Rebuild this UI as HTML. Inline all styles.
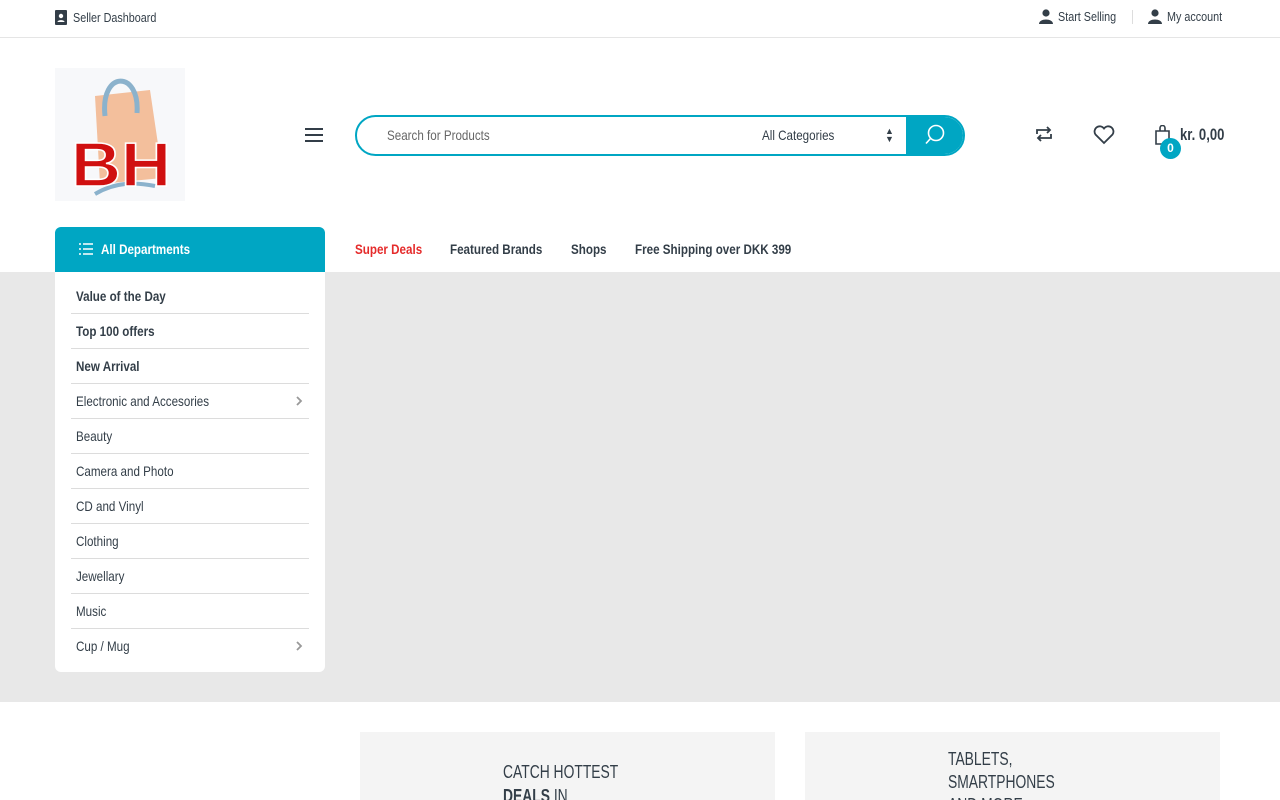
<!DOCTYPE html>
<html><head><meta charset="utf-8"><style>
*{box-sizing:border-box;margin:0;padding:0}
html,body{width:1280px;height:800px;overflow:hidden}
body{background:#fff;font-family:"Liberation Sans",sans-serif;color:#333e48;font-size:14px;position:relative}
.a{position:absolute}
.n{display:inline-block;transform:scaleX(.83);transform-origin:left center;white-space:nowrap}
.m{display:inline-block;transform:scaleX(.77);transform-origin:left center;white-space:nowrap}
.top{top:0;left:0;width:1280px;height:38px;border-bottom:1px solid #e5e5e5;font-size:13px}
.menu li{list-style:none;height:35px;border-bottom:1px solid #dcdcdc;margin:0 16px;padding-left:5px;line-height:35px;font-size:14px;position:relative}
.menu li:last-child{border:none}
.chev{position:absolute;right:6px;top:12px}
</style></head><body>
<div class="a top">
 <div class="a" style="left:55px;top:10px;display:flex;align-items:center;gap:6px"><svg width="12" height="15" viewBox="0 0 12 15"><rect width="12" height="15" rx="1" fill="#333e48"/><circle cx="6" cy="6" r="2.2" fill="#fff"/><path d="M2.5 12c0-2.5 7-2.5 7 0z" fill="#fff"/></svg><span class="n">Seller Dashboard</span></div>
 <div class="a" style="left:1039px;top:9px;display:flex;align-items:center;gap:5px"><svg width="14" height="15" viewBox="0 0 14 15"><circle cx="7" cy="4" r="3.6" fill="#333e48"/><path d="M0 15c0-6 14-6 14 0z" fill="#333e48"/></svg><span class="n">Start Selling</span></div>
 <div class="a" style="left:1132px;top:10px;height:14px;border-left:1px solid #ddd"></div>
 <div class="a" style="left:1148px;top:9px;display:flex;align-items:center;gap:5px"><svg width="14" height="15" viewBox="0 0 14 15"><circle cx="7" cy="4" r="3.6" fill="#333e48"/><path d="M0 15c0-6 14-6 14 0z" fill="#333e48"/></svg><span class="n">My account</span></div>
</div>
<svg class="a" style="left:55px;top:68px" width="130" height="133" viewBox="0 0 130 133"><rect width="130" height="133" fill="#f7f8fa"/><path d="M40 28 L95 22 L108 110 L45 116z" fill="#f3bf9c"/><path d="M50 48 C45 2 85 2 82 45" stroke="#8bb2cc" stroke-width="5" fill="none"/><path d="M40 126 C60 114 80 114 100 118" stroke="#8bb2cc" stroke-width="4" fill="none"/><text x="16" y="118" font-family="Liberation Sans" font-weight="bold" font-size="62" fill="#d01010" stroke="#fff" stroke-width="1.5" textLength="100" lengthAdjust="spacingAndGlyphs">BH</text></svg>
<svg class="a" style="left:305px;top:127px" width="18" height="16"><path d="M0 2h18M0 8h18M0 14h18" stroke="#333e48" stroke-width="2"/></svg>
<div class="a" style="left:355px;top:115px;width:610px;height:41px;border:2px solid #00a6c3;border-radius:21px;overflow:hidden">
 <div class="a" style="left:30px;top:10px;font-size:14px;color:#666"><span class="n">Search for Products</span></div>
 <div class="a" style="left:405px;top:10px;font-size:14px"><span class="n">All Categories</span></div>
 <div class="a" style="left:528px;top:10px;font-size:9px;line-height:8px">▲<br>▼</div>
 <div class="a" style="left:549px;top:-2px;width:61px;height:41px;background:#00a6c3"><svg class="a" style="left:18px;top:9px" width="22" height="22"><circle cx="12" cy="9" r="7.5" stroke="#fff" stroke-width="1.6" fill="none"/><path d="M6.5 14.5l-4.5 5" stroke="#fff" stroke-width="1.6"/></svg></div>
</div>
<svg class="a" style="left:1034px;top:125px" width="20" height="18" viewBox="0 0 20 18"><path d="M3 9V5h13M13 2l3 3-3 3M17 9v4H4M7 16l-3-3 3-3" stroke="#333e48" stroke-width="1.8" fill="none"/></svg>
<svg class="a" style="left:1093px;top:125px" width="22" height="20" viewBox="0 0 22 20"><path d="M11 18 2.5 9.5A5 5 0 0 1 11 3.5a5 5 0 0 1 8.5 6z" stroke="#333e48" stroke-width="1.8" fill="none"/></svg>
<svg class="a" style="left:1155px;top:125px" width="18" height="20" viewBox="0 0 18 20"><path d="M1 6h13v13H1zM5 6V3a2.5 2.5 0 0 1 5 0v3" stroke="#333e48" stroke-width="1.6" fill="none"/></svg>
<div class="a" style="left:1160px;top:138px;width:21px;height:21px;border-radius:50%;background:#00a6c3;color:#fff;font-size:12px;font-weight:bold;text-align:center;line-height:21px">0</div>
<div class="a" style="left:1180px;top:125px;font-size:17px;font-weight:bold"><span class="m">kr. 0,00</span></div>
<div class="a" style="left:0;top:272px;width:1280px;height:430px;background:#e8e8e8"></div>
<div class="a" style="left:55px;top:227px;width:270px;height:45px;background:#00a6c3;border-radius:6px 6px 0 0;color:#fff;font-weight:bold;font-size:14px;line-height:45px;padding-left:24px"><svg width="14" height="12" style="vertical-align:-1px;margin-right:8px"><path d="M0 1h2M0 6h2M0 11h2M4 1h10M4 6h10M4 11h10" stroke="#fff" stroke-width="1.6"/></svg><span class="n">All Departments</span></div>
<div class="a" style="left:355px;top:241px;font-weight:bold;color:#e52b2b"><span class="n">Super Deals</span></div>
<div class="a" style="left:450px;top:241px;font-weight:bold"><span class="n">Featured Brands</span></div>
<div class="a" style="left:571px;top:241px;font-weight:bold"><span class="n">Shops</span></div>
<div class="a" style="left:635px;top:241px;font-weight:bold"><span class="n">Free Shipping over DKK 399</span></div>
<ul class="a menu" style="left:55px;top:272px;width:270px;height:400px;background:#fff;border-radius:0 0 6px 6px;padding-top:7px">
<li><b class="n">Value of the Day</b></li><li><b class="n">Top 100 offers</b></li><li><b class="n">New Arrival</b></li>
<li><span class="n">Electronic and Accesories</span><svg class="chev" width="7" height="10"><path d="M1 1l4 4-4 4" stroke="#999" stroke-width="1.8" fill="none"/></svg></li><li><span class="n">Beauty</span></li><li><span class="n">Camera and Photo</span></li><li><span class="n">CD and Vinyl</span></li><li><span class="n">Clothing</span></li><li><span class="n">Jewellary</span></li><li><span class="n">Music</span></li><li><span class="n">Cup / Mug</span><svg class="chev" width="7" height="10"><path d="M1 1l4 4-4 4" stroke="#999" stroke-width="1.8" fill="none"/></svg></li>
</ul>
<div class="a" style="left:360px;top:732px;width:415px;height:68px;background:#f4f4f4;overflow:hidden"><div class="a" style="left:143px;top:28px;font-size:18px;line-height:24px"><span class="m">CATCH HOTTEST</span><br><span class="m"><b>DEALS</b> IN</span></div></div>
<div class="a" style="left:805px;top:732px;width:415px;height:68px;background:#f4f4f4;overflow:hidden"><div class="a" style="left:143px;top:16px;font-size:18px;line-height:23px"><span class="m">TABLETS,</span><br><span class="m">SMARTPHONES</span><br><span class="m">AND MORE</span></div></div>
</body></html>
